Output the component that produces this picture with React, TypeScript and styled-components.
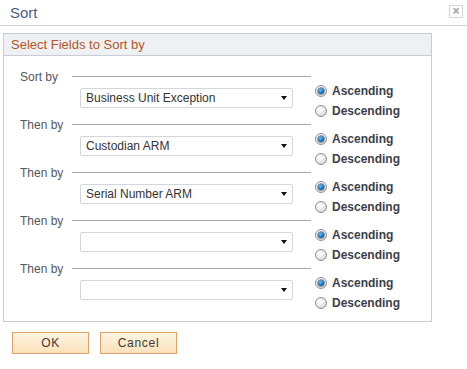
import React, { useState } from "react"
import styled, { createGlobalStyle } from "styled-components"

const GlobalStyle = createGlobalStyle`
  body {
    margin: 0;
    background: #fff;
    font-family: "Liberation Sans", Arial, sans-serif;
  }
`

type Direction = "asc" | "desc"
interface SortRowData {
  label: string
  field: string
  direction: Direction
}

const initialRows: SortRowData[] = [
  { label: "Sort by", field: "Business Unit Exception", direction: "asc" },
  { label: "Then by", field: "Custodian ARM", direction: "asc" },
  { label: "Then by", field: "Serial Number ARM", direction: "asc" },
  { label: "Then by", field: "", direction: "asc" },
  { label: "Then by", field: "", direction: "asc" },
]

const App: React.FC = () => {
  const [rows, setRows] = useState<SortRowData[]>(initialRows)

  const setDirection = (index: number, direction: Direction) => {
    setRows((prev) => prev.map((r, i) => (i === index ? { ...r, direction } : r)))
  }

  return (
    <S.Dialog>
      <GlobalStyle />
      <S.TitleBar>
        <S.Title>Sort</S.Title>
        <S.Close>×</S.Close>
      </S.TitleBar>
      <S.Group>
        <S.GroupHeader>Select Fields to Sort by</S.GroupHeader>
        <S.GroupBody>
          {rows.map((row, i) => (
            <S.Row key={i}>
              <S.FieldCol>
                <S.LabelLine>
                  <S.Label>{row.label}</S.Label>
                  <S.Rule />
                </S.LabelLine>
                <S.Select>
                  <span>{row.field}</span>
                  <S.Arrow />
                </S.Select>
              </S.FieldCol>
              <S.RadioCol>
                <S.RadioItem onClick={() => setDirection(i, "asc")}>
                  <S.Radio $checked={row.direction === "asc"} />
                  Ascending
                </S.RadioItem>
                <S.RadioItem onClick={() => setDirection(i, "desc")}>
                  <S.Radio $checked={row.direction === "desc"} />
                  Descending
                </S.RadioItem>
              </S.RadioCol>
            </S.Row>
          ))}
        </S.GroupBody>
      </S.Group>
      <S.Buttons>
        <S.Button>OK</S.Button>
        <S.Button>Cancel</S.Button>
      </S.Buttons>
    </S.Dialog>
  )
}

const S = {
  Dialog: styled.div`
    width: 467px;
    height: 369px;
    background: #fff;
  `,
  TitleBar: styled.div`
    height: 25px;
    display: flex;
    align-items: center;
    justify-content: space-between;
    border-bottom: 1px solid #cfd2d8;
    padding: 0 4px 0 10px;
  `,
  Title: styled.div`
    font-size: 15px;
    color: #4c5d7f;
    margin-top: -1px;
  `,
  Close: styled.div`
    width: 12px;
    height: 11px;
    border: 1px solid #d4d4d4;
    color: #9aa0a6;
    font-size: 12px;
    line-height: 10px;
    text-align: center;
    font-weight: bold;
    margin-top: -3px;
  `,
  Group: styled.div`
    margin: 7px 0 0 3px;
    width: 427px;
    border: 1px solid #c9ccd2;
  `,
  GroupHeader: styled.div`
    height: 21px;
    line-height: 21px;
    padding-left: 7px;
    background: #eef1f3;
    border-bottom: 1px solid #c9ccd2;
    color: #b4561f;
    font-size: 13px;
  `,
  GroupBody: styled.div`
    padding: 12px 0 13px 16px;
  `,
  Row: styled.div`
    display: flex;
    height: 48px;
    gap: 4px;
  `,
  FieldCol: styled.div`
    width: 291px;
    display: flex;
    flex-direction: column;
  `,
  LabelLine: styled.div`
    display: flex;
    align-items: center;
    height: 16px;
  `,
  Label: styled.div`
    width: 52px;
    font-size: 12px;
    color: #55575c;
    padding-top: 1px;
  `,
  Rule: styled.div`
    flex: 1;
    height: 1px;
    background: #a6a8ab;
  `,
  Select: styled.div`
    margin: 4px 0 0 60px;
    height: 18px;
    border: 1px solid #d3d6da;
    border-radius: 2px;
    background: #fff;
    display: flex;
    align-items: center;
    justify-content: space-between;
    padding: 0 4px 0 5px;
    font-size: 12px;
    color: #333;
    box-sizing: content-box;
    width: 202px;
  `,
  Arrow: styled.span`
    width: 0;
    height: 0;
    border-left: 3.5px solid transparent;
    border-right: 3.5px solid transparent;
    border-top: 4px solid #111;
    margin-right: 1px;
  `,
  RadioCol: styled.div`
    padding-top: 13px;
    display: flex;
    flex-direction: column;
  `,
  RadioItem: styled.label`
    height: 20px;
    flex: 0 0 20px;
    display: flex;
    align-items: center;
    gap: 5px;
    font-size: 12px;
    font-weight: bold;
    color: #3c3f4a;
    cursor: pointer;
  `,
  Radio: styled.span<{ $checked: boolean }>`
    width: 10px;
    height: 10px;
    border-radius: 50%;
    border: 1px solid #8d8f93;
    background: radial-gradient(circle at 40% 35%, #ffffff 0%, #e4e4e4 60%, #c9c9c9 100%);
    display: flex;
    align-items: center;
    justify-content: center;
    &::after {
      content: "";
      display: ${(p) => (p.$checked ? "block" : "none")};
      width: 6px;
      height: 6px;
      border-radius: 50%;
      background: radial-gradient(circle at 40% 35%, #6fc0f0 0%, #1a73b8 55%, #0b3f6e 100%);
      box-shadow: 0 0 0 0.5px #23344a;
    }
  `,
  Buttons: styled.div`
    display: flex;
    gap: 11px;
    padding: 10px 0 0 12px;
  `,
  Button: styled.button`
    width: 77px;
    height: 22px;
    border: 1px solid #dea36c;
    background: linear-gradient(#fdf3e2, #fbe2b9);
    font-family: "Liberation Sans", Arial, sans-serif;
    font-size: 12px;
    font-weight: 400;
    letter-spacing: 0.7px;
    color: #3a3a3a;
    padding: 0;
    cursor: pointer;
  `,
}

export default App
